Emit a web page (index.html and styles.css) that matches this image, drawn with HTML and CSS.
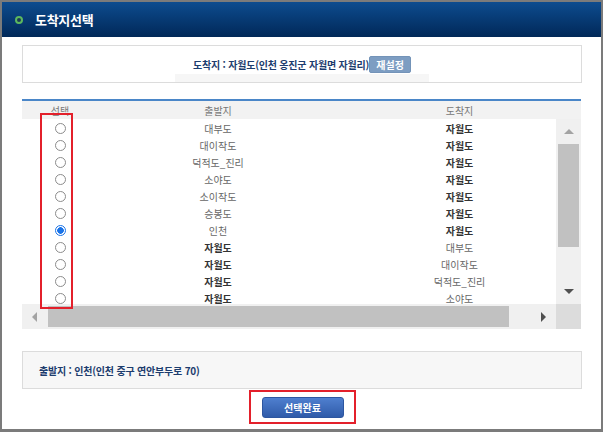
FILE: index.html
```html
<!DOCTYPE html>
<html lang="ko">
<head>
    <meta charset="UTF-8">
    <title>도착지선택</title>
    <link rel="stylesheet" href="styles.css">
</head>
<body>
    <div class="window">
        <div class="title-bar">
            <span class="title-icon"></span>
            <h1>도착지선택</h1>
        </div>

        <div class="content">
            <div class="info-box">
                <div class="info-line">
                    <span class="info-text">도착지 : 자월도(인천 옹진군 자월면 자월리)</span>
                    <button class="btn-reset">재설정</button>
                </div>
                <div class="info-strip"></div>
            </div>

            <div class="grid">
                <div class="grid-head">
                    <span class="col-sel">선택</span>
                    <span class="col-from">출발지</span>
                    <span class="col-to">도착지</span>
                </div>
                <div class="grid-main">
                    <div class="grid-rows" id="gridRows"></div>
                    <div class="vscroll">
                        <div class="arrow-box"><span class="arrow-up"></span></div>
                        <div class="vthumb"></div>
                        <div class="vtrack"></div>
                        <div class="arrow-box"><span class="arrow-down"></span></div>
                    </div>
                </div>
                <div class="hscroll">
                    <div class="arrow-box"><span class="arrow-left"></span></div>
                    <div class="hthumb"></div>
                    <div class="arrow-box"><span class="arrow-right"></span></div>
                    <div class="corner"></div>
                </div>
                <div class="mark mark-radios"></div>
            </div>

            <div class="depart-box">
                <span class="info-text">출발지 : 인천(인천 중구 연안부두로 70)</span>
            </div>

            <div class="actions">
                <div class="mark-btn">
                    <button class="btn-done">선택완료</button>
                </div>
            </div>
        </div>
    </div>

    <script>
        // route list: [from, to, from is bold, to is bold, checked]
        const routes = [
            ['대부도', '자월도', false, true],
            ['대이작도', '자월도', false, true],
            ['덕적도_진리', '자월도', false, true],
            ['소야도', '자월도', false, true],
            ['소이작도', '자월도', false, true],
            ['승봉도', '자월도', false, true],
            ['인천', '자월도', false, true, true],
            ['자월도', '대부도', true, false],
            ['자월도', '대이작도', true, false],
            ['자월도', '덕적도_진리', true, false],
            ['자월도', '소야도', true, false]
        ];

        const gridRows = document.getElementById('gridRows');

        routes.forEach(r => {
            const row = document.createElement('div');
            row.className = 'grid-row';
            row.innerHTML =
                '<span class="col-sel"><input type="radio" name="route"' + (r[4] ? ' checked' : '') + '></span>' +
                '<span class="col-from' + (r[2] ? ' strong' : '') + '">' + r[0] + '</span>' +
                '<span class="col-to' + (r[3] ? ' strong' : '') + '">' + r[1] + '</span>';
            gridRows.appendChild(row);
        });
    </script>
</body>
</html>
```

FILE: styles.css
```css
body {
    margin: 0;
    font-family: "Noto Sans CJK KR", "Noto Sans", sans-serif;
    background: #fff;
}

.window {
    width: 603px;
    height: 432px;
    box-sizing: border-box;
    border: 2px solid #7b7b7b;
    border-bottom-width: 3px;
    background: #fff;
    overflow: hidden;
}

.title-bar {
    height: 35px;
    display: flex;
    align-items: center;
    padding-left: 13px;
    background: linear-gradient(#0d4c8f, #012858);
}

.title-icon {
    width: 4px;
    height: 4px;
    border: 2px solid #5cb85f;
    border-radius: 50%;
    background: #1c3a56;
    margin-right: 12px;
}

.title-bar h1 {
    margin: 0;
    color: #fff;
    font-size: 13px;
    font-weight: bold;
    letter-spacing: -0.3px;
}

.content {
    padding: 8px 19px 0 20px;
}

.info-box {
    height: 38px;
    box-sizing: border-box;
    border: 1px solid #dcdcdc;
    display: flex;
    flex-direction: column;
    align-items: center;
    padding-top: 10px;
}

.info-line {
    height: 17px;
    display: flex;
    align-items: center;
}

.info-text {
    font-size: 10px;
    font-weight: bold;
    color: #1d3d6e;
    letter-spacing: -0.2px;
}

.btn-reset {
    width: 42px;
    height: 17px;
    padding: 0;
    border: 1px solid #7393b8;
    border-radius: 2px;
    background: #7d9dc2;
    color: #fff;
    font-family: inherit;
    font-size: 10px;
    font-weight: bold;
}

.info-strip {
    width: 254px;
    height: 9px;
    margin-top: 1px;
    background: #f6f6f6;
}

/* grid */
.grid {
    position: relative;
    width: 559px;
    margin-top: 16px;
    border-top: 2px solid #4a86c8;
}

.grid-head,
.grid-row {
    display: flex;
    width: 559px;
    font-size: 10px;
}

.grid-head {
    height: 18px;
    align-items: center;
    background: #f2f2f2;
    color: #777;
}

.col-sel {
    width: 76px;
    text-align: center;
}

.col-from {
    width: 240px;
    text-align: center;
}

.col-to {
    width: 243px;
    text-align: center;
}

.grid-main {
    display: flex;
    height: 185px;
}

.grid-rows {
    width: 534px;
    overflow: hidden;
    padding-top: 1px;
}

.grid-row {
    height: 17px;
    align-items: center;
    color: #666;
}

.grid-row .strong {
    color: #333;
    font-weight: bold;
}

.grid-row .col-sel {
    display: flex;
    justify-content: center;
}

.grid-row input[type="radio"] {
    appearance: none;
    -webkit-appearance: none;
    width: 11px;
    height: 11px;
    margin: 0;
    border: 1px solid #8c8c8c;
    border-radius: 50%;
    background: #fff;
}

.grid-row input[type="radio"]:checked {
    border-color: #1a73e8;
    background: radial-gradient(circle, #1a73e8 3px, #fff 3.6px);
}

.vscroll {
    width: 25px;
    display: flex;
    flex-direction: column;
    background: #f0f0f0;
}

.arrow-box {
    width: 25px;
    height: 25px;
    flex-shrink: 0;
    display: flex;
    align-items: center;
    justify-content: center;
}

.vthumb {
    height: 103px;
    margin: 0 2px;
    background: #c1c1c1;
}

.vtrack {
    flex: 1;
}

.arrow-up {
    border-left: 5px solid transparent;
    border-right: 5px solid transparent;
    border-bottom: 5px solid #a3a3a3;
}

.arrow-down {
    border-left: 5px solid transparent;
    border-right: 5px solid transparent;
    border-top: 5px solid #505050;
}

.hscroll {
    display: flex;
    height: 25px;
    background: #f0f0f0;
}

.hthumb {
    width: 461px;
    height: 21px;
    margin: 2px 0 0 1px;
    background: #c1c1c1;
}

.hscroll .arrow-box:nth-child(3) {
    margin-left: 22px;
}

.arrow-left {
    border-top: 5px solid transparent;
    border-bottom: 5px solid transparent;
    border-right: 5px solid #a3a3a3;
}

.arrow-right {
    border-top: 5px solid transparent;
    border-bottom: 5px solid transparent;
    border-left: 5px solid #505050;
}

.corner {
    width: 25px;
    margin-left: auto;
    background: #dcdcdc;
}

/* red annotation marks */
.mark {
    position: absolute;
    border: 2px solid #e3202b;
}

.mark-radios {
    left: 18px;
    top: 12px;
    width: 29px;
    height: 192px;
}

.depart-box {
    height: 38px;
    box-sizing: border-box;
    margin-top: 22px;
    border: 1px solid #dcdcdc;
    background: #f7f7f7;
    display: flex;
    align-items: center;
    padding-left: 16px;
}

.actions {
    display: flex;
    justify-content: center;
    margin-top: 1px;
}

.mark-btn {
    display: flex;
    padding: 5px 10px 4px 11px;
    border: 2px solid #e3202b;
}

.btn-done {
    width: 82px;
    height: 21px;
    padding: 0;
    border: 1px solid #2d56a0;
    border-radius: 3px;
    background: linear-gradient(#4f7fcf, #2f5ba9);
    color: #fff;
    font-family: inherit;
    font-size: 10px;
    font-weight: bold;
}
```
